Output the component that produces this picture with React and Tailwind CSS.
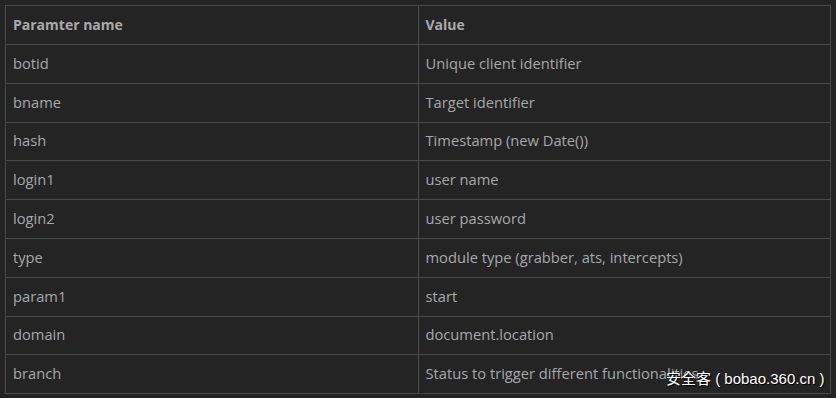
const rows = [
  ['botid', 'Unique client identifier'],
  ['bname', 'Target identifier'],
  ['hash', 'Timestamp (new Date())'],
  ['login1', 'user name'],
  ['login2', 'user password'],
  ['type', 'module type (grabber, ats, intercepts)'],
  ['param1', 'start'],
  ['domain', 'document.location'],
  ['branch', 'Status to trigger different functionalities'],
];

export default function App() {
  return (
    <div className="relative w-[836px] h-[398px] bg-[#242424] p-[5px] overflow-hidden font-['Open_Sans',sans-serif] text-[14.7px] text-[#a6a8aa]">
      <table className="w-[826px] border-collapse table-fixed">
        <thead>
          <tr className="h-[39px]">
            <th className="border border-[#4a4a4a] text-left font-bold text-[14px] pl-[7px] pb-[2px] text-[#aaaaaa]">Paramter name</th>
            <th className="border border-[#4a4a4a] text-left font-bold text-[14px] pl-[7px] pb-[2px] text-[#aaaaaa]">Value</th>
          </tr>
        </thead>
        <tbody>
          {rows.map(([name, value]) => (
            <tr key={name} className="h-[38.8px]">
              <td className="border border-[#4a4a4a] pl-[7px] pb-[2px]">{name}</td>
              <td className="border border-[#4a4a4a] pl-[7px] pb-[2px]">{value}</td>
            </tr>
          ))}
        </tbody>
      </table>
      {/* watermark */}
      <div className="absolute left-[666px] top-[368px] text-white text-[15px] font-['Liberation_Sans','Noto_Sans_CJK_SC',sans-serif] [text-shadow:1px_1px_1px_#000]">
        安全客 ( bobao.360.cn )
      </div>
    </div>
  );
}
